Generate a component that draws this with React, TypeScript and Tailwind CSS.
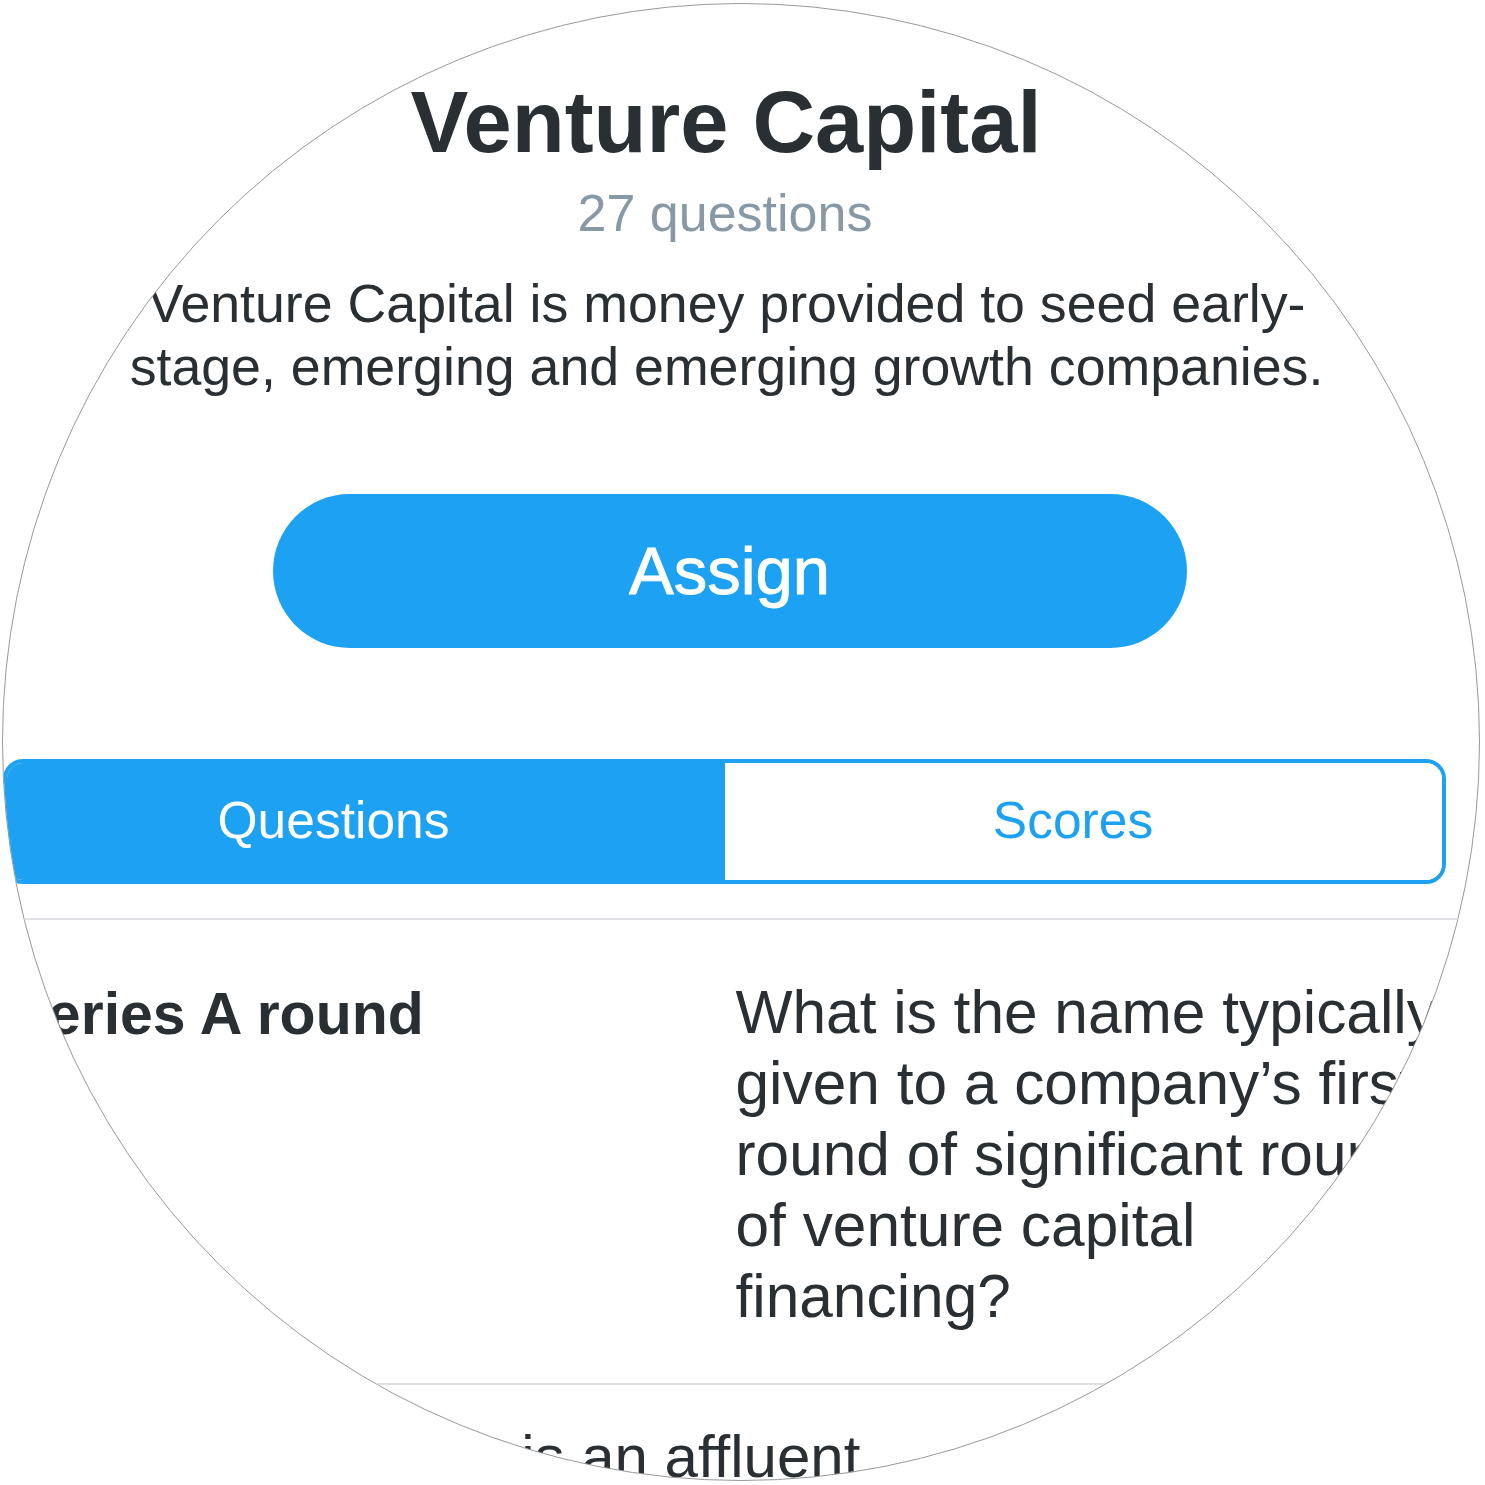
import React from "react";

export default function App() {
  const font = { fontFamily: '"Liberation Sans", Arial, Helvetica, sans-serif' };
  return (
    <div className="w-[1485px] h-[1485px] bg-white pt-[3px] pl-[2px]" style={font}>
      <div className="w-[1478px] h-[1478px] rounded-full overflow-hidden border-[1.5px] border-[#999999] bg-white">
        <div className="-ml-[3.5px] -mt-[4.5px] w-[1485px] flex flex-col text-[#292f33]">
          {/* screen column */}
          <div className="ml-[3px] w-[1443px] flex flex-col items-center">
            <h1 className="pt-[72px] ml-[4px] text-[86.7px] leading-[100px] font-bold whitespace-nowrap">
              Venture Capital
            </h1>
            <p className="mt-[11px] ml-[2px] text-[52px] leading-[60px] text-[#8899a6] whitespace-nowrap">
              27 questions
            </p>
            <p className="mt-[29px] ml-[5px] text-[53.7px] leading-[63px] text-center whitespace-nowrap">
              Venture Capital is money provided to seed early-
              <br />
              stage, emerging and emerging growth companies.
            </p>
            <button className="mt-[96px] self-start ml-[270px] w-[914px] h-[154px] rounded-full bg-[#1da1f2] text-white text-[67px] leading-none [-webkit-text-stroke:0.9px_white]">
              Assign
            </button>
            <div className="mt-[111px] w-full h-[125px] flex rounded-[20px] border-[4px] border-[#1da1f2] overflow-hidden text-[51.5px]">
              <div className="w-[718px] h-full bg-[#1da1f2] text-white flex items-center justify-center pr-[64px]">
                Questions
              </div>
              <div className="flex-1 h-full bg-white text-[#1da1f2] flex items-center justify-center pr-[20px]">
                Scores
              </div>
            </div>
          </div>
          <div className="mt-[34px] h-[2px] w-full bg-[#dfe1e6]" />
          {/* row 1 */}
          <div className="flex pt-[57px] pb-[51px]">
            <div className="w-[736px] pl-[9px]">
              <p className="mt-[2px] text-[59px] leading-[71px] font-bold whitespace-nowrap">Series A round</p>
            </div>
            <div className="w-[715px]">
              <p className="text-[60.4px] leading-[71px]">
                What is the name typically given to a company’s first round of significant round of venture capital financing?
              </p>
            </div>
          </div>
          <div className="h-[2px] w-full bg-[#dfe1e6]" />
          {/* row 2 */}
          <div className="pt-[36px] pl-[365px]">
            <p className="text-[60px] leading-[71px] whitespace-nowrap">What is an affluent</p>
          </div>
        </div>
      </div>
    </div>
  );
}
